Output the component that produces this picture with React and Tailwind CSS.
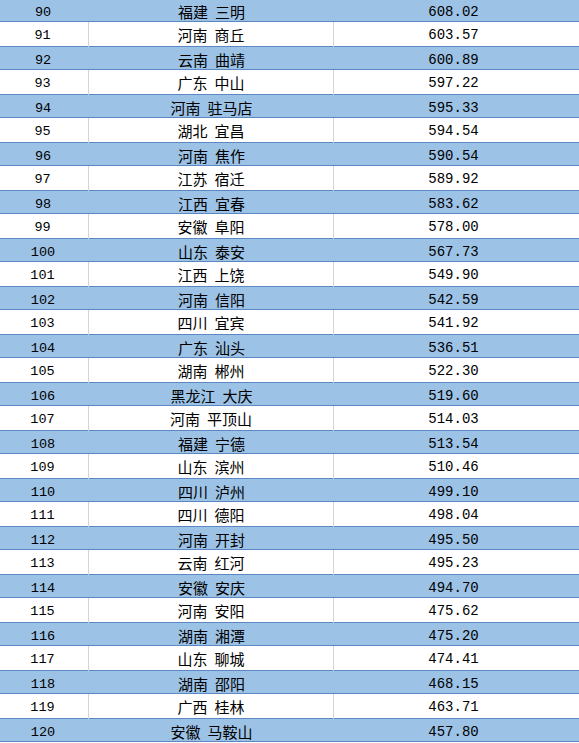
import React from "react";

const rows = [
  [90, "福建", "三明", "608.02"],
  [91, "河南", "商丘", "603.57"],
  [92, "云南", "曲靖", "600.89"],
  [93, "广东", "中山", "597.22"],
  [94, "河南", "驻马店", "595.33"],
  [95, "湖北", "宜昌", "594.54"],
  [96, "河南", "焦作", "590.54"],
  [97, "江苏", "宿迁", "589.92"],
  [98, "江西", "宜春", "583.62"],
  [99, "安徽", "阜阳", "578.00"],
  [100, "山东", "泰安", "567.73"],
  [101, "江西", "上饶", "549.90"],
  [102, "河南", "信阳", "542.59"],
  [103, "四川", "宜宾", "541.92"],
  [104, "广东", "汕头", "536.51"],
  [105, "湖南", "郴州", "522.30"],
  [106, "黑龙江", "大庆", "519.60"],
  [107, "河南", "平顶山", "514.03"],
  [108, "福建", "宁德", "513.54"],
  [109, "山东", "滨州", "510.46"],
  [110, "四川", "泸州", "499.10"],
  [111, "四川", "德阳", "498.04"],
  [112, "河南", "开封", "495.50"],
  [113, "云南", "红河", "495.23"],
  [114, "安徽", "安庆", "494.70"],
  [115, "河南", "安阳", "475.62"],
  [116, "湖南", "湘潭", "475.20"],
  [117, "山东", "聊城", "474.41"],
  [118, "湖南", "邵阳", "468.15"],
  [119, "广西", "桂林", "463.71"],
  [120, "安徽", "马鞍山", "457.80"],
];

function Row({ rank, prov, city, score }) {
  const blue = rank % 2 === 0;
  const rowCls = blue
    ? "bg-[#9cc2e6] border-y border-[#5b87c2]"
    : "bg-white";
  const divider = blue ? "" : "border-r border-[#d4d4d4]";

  return (
    <div className={`grid grid-cols-[89px_245px_245px] h-[24px] items-center text-black ${rowCls}`}>
      <div className={`h-full flex items-center justify-center pt-[3px] pr-[3px] text-[13.5px] font-['Liberation_Mono',monospace] ${divider}`}>
        {rank}
      </div>
      <div className={`h-full flex items-center justify-center pt-[2px] text-[15px] font-['Noto_Sans_CJK_SC',sans-serif] ${divider}`}>
        <span>{prov}</span>
        <span className="inline-block w-[7px]"> </span>
        <span>{city}</span>
      </div>
      <div className="h-full flex items-center justify-center pt-[3px] pr-[6px] text-[14px] font-['Liberation_Mono',monospace]">
        {score}
      </div>
    </div>
  );
}

export default function App() {
  return (
    <div className="w-[579px] h-[743px] overflow-hidden bg-white">
      <div className="-mt-[2px]">
        {rows.map(([rank, prov, city, score]) => (
          <Row key={rank} rank={rank} prov={prov} city={city} score={score} />
        ))}
      </div>
    </div>
  );
}
